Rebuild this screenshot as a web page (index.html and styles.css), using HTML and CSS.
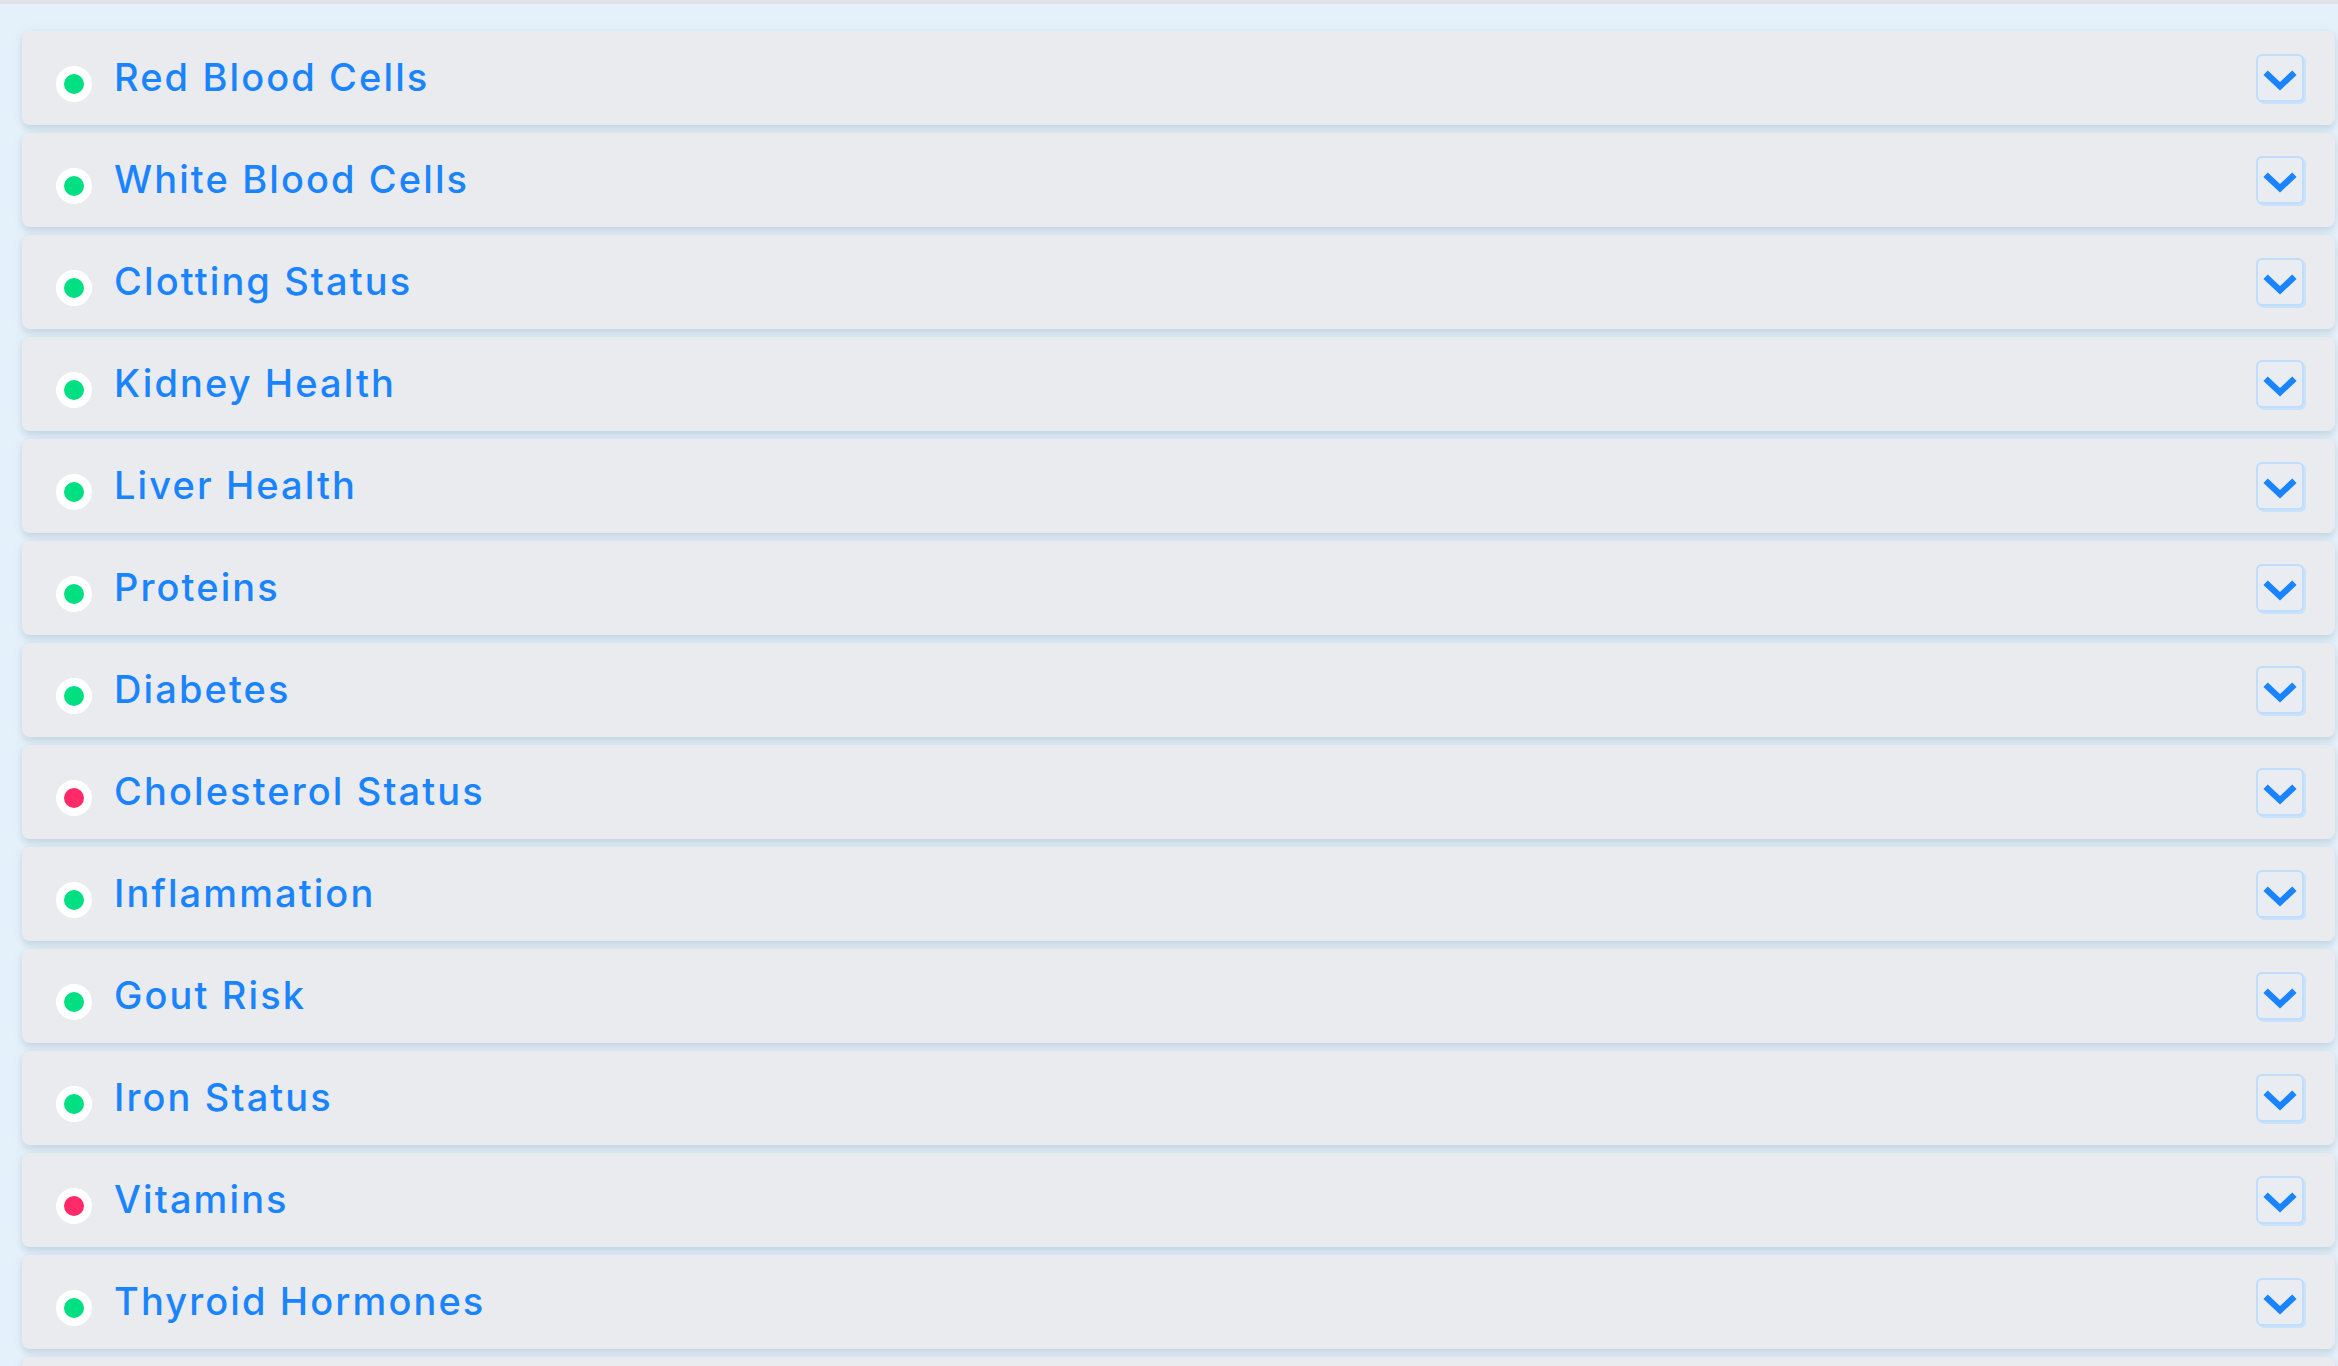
FILE: index.html
```html
<!DOCTYPE html>
<html lang="en">
<head>
  <meta charset="UTF-8">
  <meta name="viewport" content="width=device-width, initial-scale=1.0">
  <title>Blood Test Results</title>
  <link rel="stylesheet" href="styles.css">
</head>
<body>
  <div class="topbar"></div>
  <div class="panel-list">
    <div class="panel"><span class="dot ok"></span><span class="title">Red Blood Cells</span><button class="toggle"><svg viewBox="0 0 40 24"><polyline points="4,4 20,19 36,4"/></svg></button></div>
    <div class="panel"><span class="dot ok"></span><span class="title">White Blood Cells</span><button class="toggle"><svg viewBox="0 0 40 24"><polyline points="4,4 20,19 36,4"/></svg></button></div>
    <div class="panel"><span class="dot ok"></span><span class="title">Clotting Status</span><button class="toggle"><svg viewBox="0 0 40 24"><polyline points="4,4 20,19 36,4"/></svg></button></div>
    <div class="panel"><span class="dot ok"></span><span class="title">Kidney Health</span><button class="toggle"><svg viewBox="0 0 40 24"><polyline points="4,4 20,19 36,4"/></svg></button></div>
    <div class="panel"><span class="dot ok"></span><span class="title">Liver Health</span><button class="toggle"><svg viewBox="0 0 40 24"><polyline points="4,4 20,19 36,4"/></svg></button></div>
    <div class="panel"><span class="dot ok"></span><span class="title">Proteins</span><button class="toggle"><svg viewBox="0 0 40 24"><polyline points="4,4 20,19 36,4"/></svg></button></div>
    <div class="panel"><span class="dot ok"></span><span class="title">Diabetes</span><button class="toggle"><svg viewBox="0 0 40 24"><polyline points="4,4 20,19 36,4"/></svg></button></div>
    <div class="panel"><span class="dot bad"></span><span class="title">Cholesterol Status</span><button class="toggle"><svg viewBox="0 0 40 24"><polyline points="4,4 20,19 36,4"/></svg></button></div>
    <div class="panel"><span class="dot ok"></span><span class="title">Inflammation</span><button class="toggle"><svg viewBox="0 0 40 24"><polyline points="4,4 20,19 36,4"/></svg></button></div>
    <div class="panel"><span class="dot ok"></span><span class="title">Gout Risk</span><button class="toggle"><svg viewBox="0 0 40 24"><polyline points="4,4 20,19 36,4"/></svg></button></div>
    <div class="panel"><span class="dot ok"></span><span class="title">Iron Status</span><button class="toggle"><svg viewBox="0 0 40 24"><polyline points="4,4 20,19 36,4"/></svg></button></div>
    <div class="panel"><span class="dot bad"></span><span class="title">Vitamins</span><button class="toggle"><svg viewBox="0 0 40 24"><polyline points="4,4 20,19 36,4"/></svg></button></div>
    <div class="panel"><span class="dot ok"></span><span class="title">Thyroid Hormones</span><button class="toggle"><svg viewBox="0 0 40 24"><polyline points="4,4 20,19 36,4"/></svg></button></div>
    <div class="panel"></div>
  </div>
</body>
</html>
```

FILE: styles.css
```css
* {
  box-sizing: border-box;
}

html, body {
  height: 100%;
}

body {
  margin: 0;
  font-family: Inter, 'Noto Sans', sans-serif;
  background: #e5f1fa;
  overflow: hidden;
}

.topbar {
  height: 4px;
  background: #dfe3e7;
}

.panel-list {
  display: flex;
  flex-direction: column;
  gap: 8px;
  padding: 27px 3px 0 22px;
}

.panel {
  display: flex;
  align-items: center;
  flex-shrink: 0;
  height: 94px;
  padding: 0 31px 0 34px;
  background: #e9ebef;
  border-radius: 8px;
  box-shadow: 0 4px 6px rgba(70, 100, 125, 0.15), 0 0 12px rgba(70, 100, 125, 0.07);
}

.dot {
  width: 36px;
  height: 36px;
  margin-top: 12px;
  border-radius: 50%;
  border: 8px solid #fff;
  flex-shrink: 0;
}

.dot.ok {
  background: #00e083;
}

.dot.bad {
  background: #ff2a68;
}

.title {
  margin-left: 22px;
  margin-bottom: 3px;
  font-size: 38px;
  font-weight: 500;
  letter-spacing: 2.1px;
  color: #1a84ff;
  flex: 1;
}

.toggle {
  width: 48px;
  height: 48px;
  padding: 0;
  border: 2px solid #c0defc;
  border-radius: 6px;
  background: #e9ecf1;
  box-shadow: 2px 2px 0 #c9e2fb;
  display: flex;
  align-items: center;
  justify-content: center;
}

.toggle svg {
  width: 36px;
  height: 22px;
  margin-top: 4px;
}

.toggle polyline {
  fill: none;
  stroke: #1a84ff;
  stroke-width: 7;
  stroke-linejoin: miter;
}
```
